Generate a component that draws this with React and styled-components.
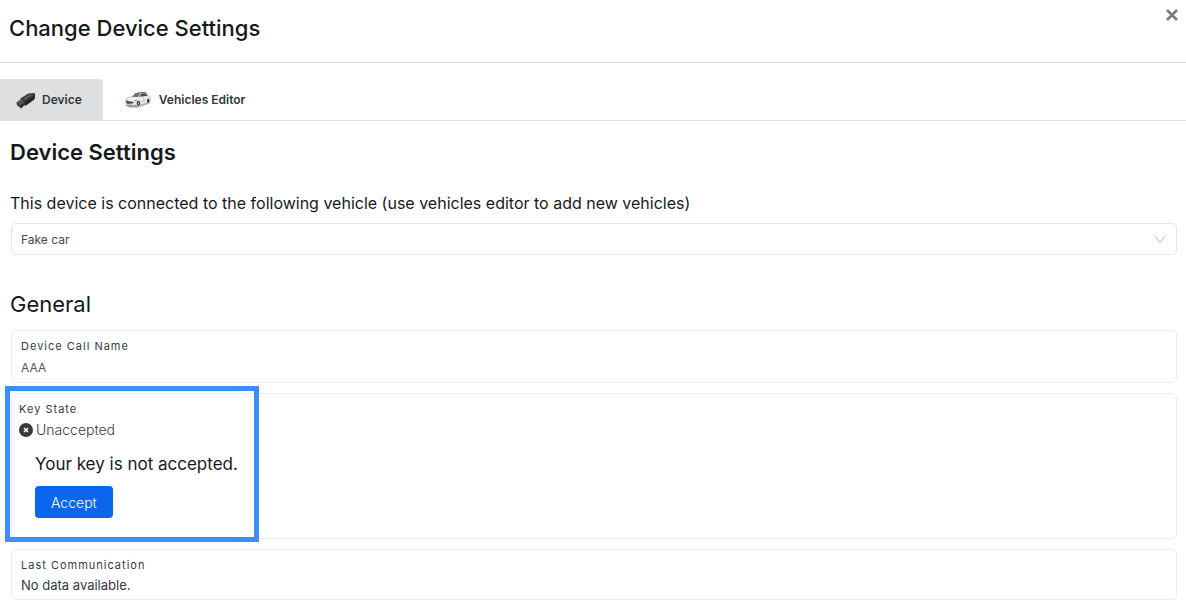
import React, { useState } from "react";
import styled, { createGlobalStyle } from "styled-components";

const DongleIcon = () => (
  <svg width="20" height="18" viewBox="0 0 20 18" aria-hidden="true">
    <path d="M0.4 11.8 4.8 8 10 10.6 9.4 13.6 5.2 17.6 1.2 14.6z" fill="#3c3c3c" />
    <path d="M0.6 11.6 4.8 8.2 8.2 10.4 4 14.2z" fill="#626262" />
    <path d="M4.6 7.6 12.2 2.8 18.4 2.2 19.2 4 18.6 8.2 9.4 15 8.2 11.2z" fill="#232323" />
    <path d="M4.6 7.6 12.2 2.8 18.4 2.2 19 3.8 8.6 11.2z" fill="#404040" />
    <path d="M7.6 7.6 12.8 4.2 16 3.8 9.6 8.6z" fill="#5a5a5a" />
    <path d="M1.8 12.2 3 13.2M4 10.4 5.4 11.6M4.4 15.4 7 13.2" stroke="#171717" strokeWidth="0.9" />
  </svg>
);

const CarIcon = () => (
  <svg width="26" height="19" viewBox="0 0 26 19" aria-hidden="true">
    <path d="M1 15.6 4 17.6 12 17.8 24.6 13.4 25 11 12 14.2z" fill="#b0b0b0" />
    <path d="M0.6 10.2 2.8 7.8 7 6.6 10.2 3.8 16 2.6 21.4 3 24 6 25.2 8.6 25 11.4 23.6 12.6 13.6 15.6 5.4 15.8 1.2 15z" fill="#e9e9e9" stroke="#a0a0a0" strokeWidth="0.6" />
    <path d="M6.6 6.8 10.2 4 15.4 3.4 13 7z" fill="#6a6a6a" />
    <path d="M14.4 6.8 16.2 3.6 20.6 3.6 22.6 5.8z" fill="#4a4a4a" />
    <path d="M10 3.8 15.8 2.6 21.4 3" stroke="#444" strokeWidth="0.8" fill="none" />
    <path d="M3 8.8 8.6 9 12.2 7.8" stroke="#fcfcfc" strokeWidth="1.2" fill="none" />
    <path d="M0.8 10.8 8.6 12 8.2 13.4 1.2 12.8z" fill="#484848" />
    <path d="M9.4 10.4 12.2 9.4 11.6 10.8 9.4 11.6zM0.8 10.2 2.4 9.8 2.8 10.8z" fill="#858585" />
    <path d="M2 12.8 6.4 13.2 6.4 14.4 2 14z" fill="#c03c4c" />
    <path d="M1.2 15.2 5.4 16 12 15.6" stroke="#777" strokeWidth="0.8" fill="none" />
    <ellipse cx="13.4" cy="13.2" rx="1.7" ry="2.4" fill="#333" />
    <ellipse cx="13.5" cy="13.2" rx="0.8" ry="1.3" fill="#a0a0a0" />
    <ellipse cx="23.2" cy="10.8" rx="1.2" ry="2" fill="#333" />
    <path d="M15.8 12 21.4 10.4M18.4 6.4 18.8 11" stroke="#aaa" strokeWidth="0.5" />
  </svg>
);

const CrossIcon = () => (
  <svg width="12" height="12" viewBox="0 0 12 12" aria-hidden="true">
    <path d="M1 1 11 11M11 1 1 11" stroke="currentColor" strokeWidth="2.6" />
  </svg>
);

const ChevronIcon = () => (
  <svg width="10" height="8" viewBox="0 0 10 8" aria-hidden="true">
    <path d="M0.5 0.6 5 6.8 9.5 0.6" fill="none" stroke="currentColor" strokeWidth="1" />
  </svg>
);

const RejectedIcon = () => (
  <svg width="14" height="14" viewBox="0 0 14 14" aria-hidden="true">
    <circle cx="7" cy="7" r="7" fill="#343a40" />
    <path d="M5 5 9 9M9 5 5 9" stroke="#fff" strokeWidth="1.6" />
  </svg>
);

const App = () => {
  const [tab, setTab] = useState("device");
  const [name, setName] = useState("AAA");

  return (
    <>
      <GlobalStyle />
      <Header>
        <Title>Change Device Settings</Title>
        <CloseButton type="button" aria-label="Close">
          <CrossIcon />
        </CloseButton>
      </Header>
      <Tabs role="tablist">
        <Tab
          type="button"
          role="tab"
          aria-selected={tab === "device"}
          $active={tab === "device"}
          onClick={() => setTab("device")}
        >
          <DongleIcon />
          Device
        </Tab>
        <Tab
          type="button"
          role="tab"
          aria-selected={tab === "vehicles"}
          $active={tab === "vehicles"}
          onClick={() => setTab("vehicles")}
        >
          <CarIcon />
          Vehicles Editor
        </Tab>
      </Tabs>
      <Content>
        <Heading $weight={600}>Device Settings</Heading>
        <VehicleLabel htmlFor="vehicle">
          This device is connected to the following vehicle (use vehicles
          editor to add new vehicles)
        </VehicleLabel>
        <SelectBox>
          <Select id="vehicle" defaultValue="fake">
            <option value="fake">Fake car</option>
          </Select>
          <ChevronIcon />
        </SelectBox>
        <GeneralSection>
          <Heading $weight={400}>General</Heading>
          <Cards>
            <Card>
              <FieldLabel htmlFor="call-name">Device Call Name</FieldLabel>
              <NameInput
                id="call-name"
                value={name}
                onChange={(e) => setName(e.target.value)}
              />
            </Card>
            <KeyCard>
              <Highlight />
              <FieldLabel as="span">Key State</FieldLabel>
              <KeyStatus>
                <RejectedIcon />
                Unaccepted
              </KeyStatus>
              <KeyAction>
                <KeyMessage>Your key is not accepted.</KeyMessage>
                <AcceptButton type="button">Accept</AcceptButton>
              </KeyAction>
            </KeyCard>
            <Card>
              <FieldLabel as="span">Last Communication</FieldLabel>
              <FieldValue>No data available.</FieldValue>
            </Card>
          </Cards>
        </GeneralSection>
      </Content>
    </>
  );
};

const GlobalStyle = createGlobalStyle`
  * {
    box-sizing: border-box;
  }
  body {
    margin: 0;
    background: #fff;
    color: #16191c;
    font-family: Inter, "Liberation Sans", sans-serif;
  }
  button, input, select {
    font-family: inherit;
  }
  svg {
    flex-shrink: 0;
  }
`;

const Header = styled.header`
  display: flex;
  align-items: flex-start;
  justify-content: space-between;
  padding: 12px 8px 18px 9px;
  border-bottom: 1px solid #dee0e6;
`;

const Title = styled.h1`
  margin: 0;
  font-size: 22px;
  font-weight: 500;
  line-height: 32px;
`;

const CloseButton = styled.button`
  display: flex;
  margin-top: -3px;
  padding: 0;
  border: 0;
  background: none;
  color: #7b7b7b;
  cursor: pointer;
`;

const Tabs = styled.div`
  display: flex;
  margin-top: 16px;
  border-bottom: 1px solid #dee0e6;
`;

const Tab = styled.button`
  display: flex;
  align-items: center;
  gap: ${(props) => (props.$active ? "6px" : "8px")};
  height: 41px;
  padding: 0 21px 0 ${(props) => (props.$active ? "16px" : "22px")};
  border: 0;
  border-radius: 0 4px 0 0;
  background: ${(props) => (props.$active ? "#dedfe1" : "transparent")};
  color: #30363c;
  font-size: 12px;
  font-weight: 600;
  cursor: pointer;
`;

const Content = styled.main`
  padding: 15px 9px 6px 11px;
`;

const Heading = styled.h2`
  margin: 0 0 0 -1px;
  font-size: 22px;
  font-weight: ${(props) => props.$weight};
  line-height: 32px;
`;

const VehicleLabel = styled.label`
  display: block;
  margin: 23px 0 8px -1px;
  font-size: 16px;
  line-height: 24px;
`;

const SelectBox = styled.div`
  position: relative;
  color: #b8b8b8;

  svg {
    position: absolute;
    top: 13px;
    right: 12px;
    pointer-events: none;
  }
`;

const Select = styled.select`
  display: block;
  width: 100%;
  height: 32px;
  padding: 0 32px 0 9px;
  border: 1px solid #e5e6e7;
  border-radius: 5px;
  appearance: none;
  background: #fff;
  color: #444a50;
  font-size: 12px;
`;

const GeneralSection = styled.section`
  margin-top: 33px;
`;

const Cards = styled.div`
  display: flex;
  flex-direction: column;
  gap: 10px;
  margin-top: 10px;
`;

const Card = styled.div`
  padding: 7px 9px 5px;
  border: 1px solid #ececec;
  border-radius: 5px;
`;

const KeyCard = styled(Card)`
  position: relative;
  padding: 7px 7px 20px;
`;

/* frame drawn over the key state block */
const Highlight = styled.div`
  position: absolute;
  top: -8px;
  left: -7px;
  width: 254px;
  bottom: -4px;
  border: 5px solid #3a8ffc;
  pointer-events: none;
`;

const FieldLabel = styled.label`
  display: block;
  color: #343a40;
  font-size: 11px;
  font-weight: 400;
  letter-spacing: 1px;
  line-height: 16px;
`;

const NameInput = styled.input`
  display: block;
  width: 100%;
  height: 23px;
  padding: 4px 0 0;
  border: 0;
  background: none;
  color: #50565c;
  font-size: 12px;
`;

const FieldValue = styled.div`
  padding-top: 2px;
  margin-bottom: -1px;
  color: #343a40;
  font-size: 13px;
  line-height: 20px;
`;

const KeyStatus = styled.div`
  display: flex;
  align-items: center;
  gap: 3px;
  padding: 3px 0;
  color: #343a40;
  font-size: 14px;
  font-weight: 300;
  line-height: 20px;
`;

const KeyAction = styled.div`
  padding: 9px 16px 0;
`;

const KeyMessage = styled.p`
  margin: 0 0 10px;
  font-size: 17px;
  line-height: 24px;
`;

const AcceptButton = styled.button`
  height: 32px;
  padding: 0 16px;
  border: 0;
  border-radius: 4px;
  background: #0b66ee;
  color: #fff;
  font-size: 14px;
  font-weight: 300;
  cursor: pointer;
`;

export default App;
